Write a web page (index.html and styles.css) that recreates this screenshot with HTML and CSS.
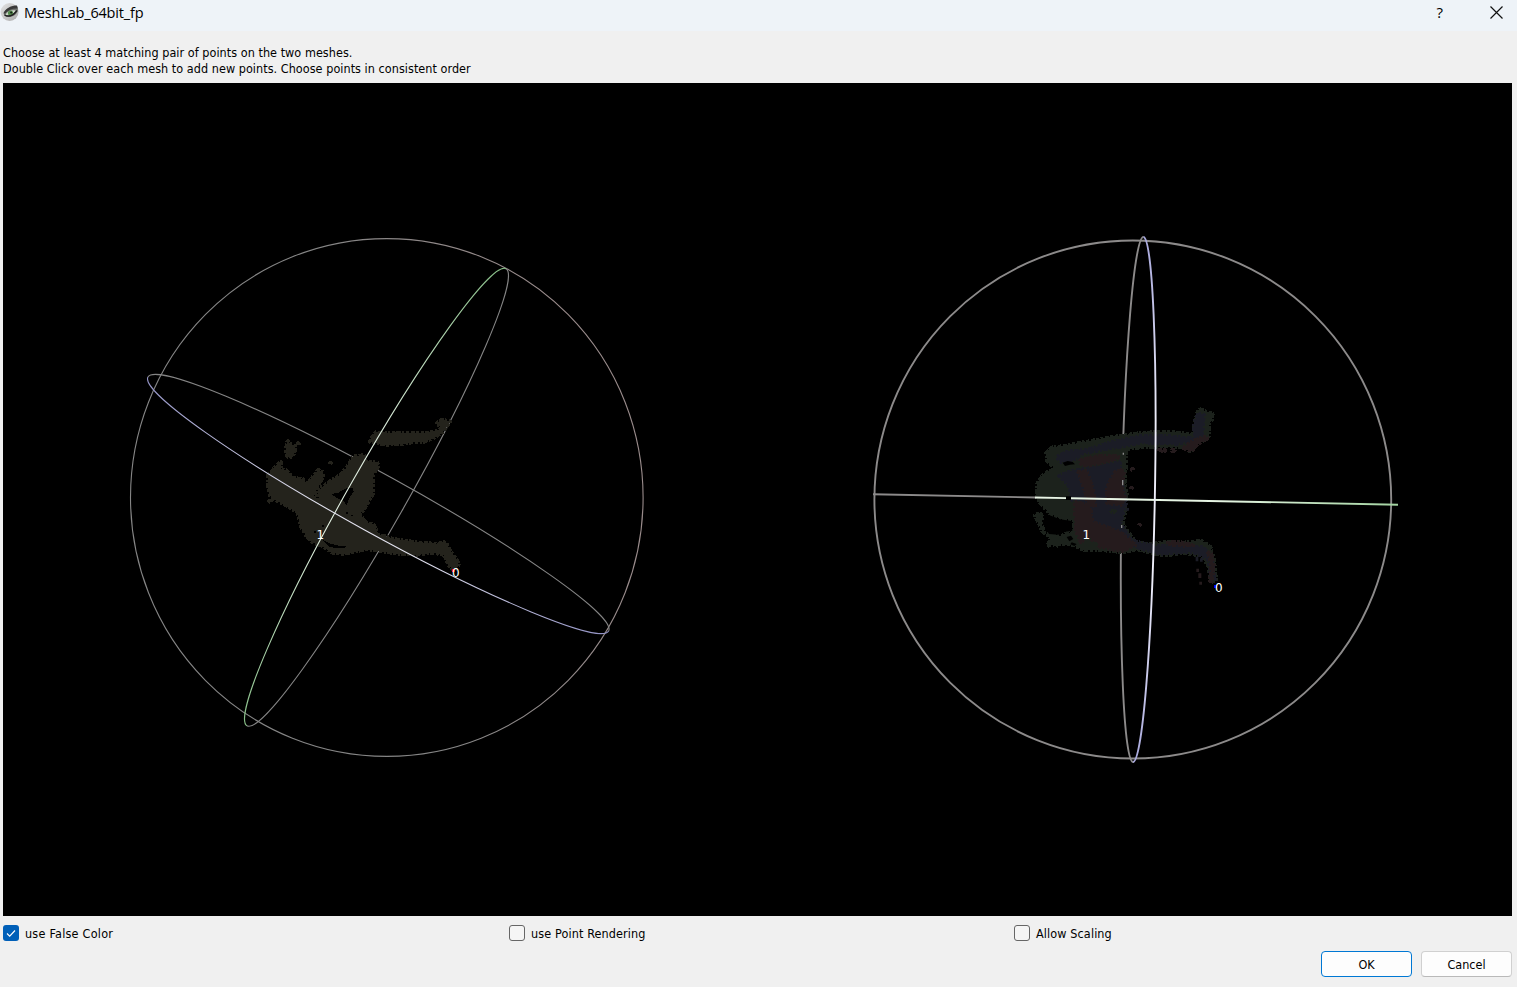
FILE: index.html
```html
<!DOCTYPE html>
<html lang="en">
<head>
<meta charset="utf-8">
<title>MeshLab_64bit_fp</title>
<link rel="stylesheet" href="styles.css">
</head>
<body>
<div class="dialog">
  <header class="titlebar">
    <svg class="logo" width="20" height="20" viewBox="0 0 20 20">
      <defs>
        <linearGradient id="ball" x1="0" y1="0" x2="1" y2="1"><stop offset="0" stop-color="#e4e4e4"/><stop offset="1" stop-color="#a9a9a9"/></linearGradient>
      </defs>
      <circle cx="9.600" cy="10" r="9" fill="url(#ball)"/>
      <path d="M3.500 11.500C6 6.500 11 4.500 17 4L18 8C17 13 12 15.500 7 15C5 14.500 4 13 3.500 11.500Z" fill="#70736f"/>
      <path d="M3.500 11C6 6 11 3.500 17 3.500L17.800 6.500C13 6 8 8 5 11.500Z" fill="#3a3a3a"/>
      <path d="M5.500 12.800C7 9.500 11 7.800 15.500 8.500C14 12.500 10 14.500 5.500 12.800Z" fill="#cdd8c8"/>
      <circle cx="10.500" cy="11" r="2.600" fill="#548d4d"/>
      <circle cx="11.200" cy="10.500" r="1.100" fill="#162116"/>
      <path d="M4.500 13Q11 16.500 17 8.500" fill="none" stroke="#202020" stroke-width="1.400"/>
    </svg>
    <span class="title">MeshLab_64bit_fp</span>
    <span class="help">?</span>
    <svg class="close" width="13" height="13" viewBox="0 0 13 13"><path d="M.5.5l12 12M12.500.5l-12 12"/></svg>
  </header>

  <p class="hint"><span class="hint-a">Choose at least 4 matching pair of points on the two meshes.</span><br><span class="hint-b">Double Click over each mesh to add new points. Choose points in consistent order</span></p>

  <svg class="viewport" width="1509" height="833" viewBox="3 83 1509 833">
    <defs>
      <linearGradient id="rim" gradientUnits="userSpaceOnUse" x1="130" y1="560" x2="643" y2="430"><stop offset=".5" stop-color="#858585"/><stop offset=".9" stop-color="#998b8b"/></linearGradient>
      <linearGradient id="blueArc" x1="0" x2="1" y1="0" y2="0"><stop offset="0" stop-color="#9292c4"/><stop offset=".4" stop-color="#e2e2ee"/><stop offset=".6" stop-color="#e2e2ee"/><stop offset="1" stop-color="#9292c4"/></linearGradient>
      <linearGradient id="greenArc" x1="0" x2="1" y1="0" y2="0"><stop offset="0" stop-color="#86bd86"/><stop offset=".4" stop-color="#e2f0e2"/><stop offset=".6" stop-color="#dceadc"/><stop offset="1" stop-color="#86bd86"/></linearGradient>
      <linearGradient id="vertArc" x1="0" x2="1" y1="0" y2="0"><stop offset="0" stop-color="#a8a8dc"/><stop offset=".35" stop-color="#eeeefa"/><stop offset=".65" stop-color="#eeeefa"/><stop offset="1" stop-color="#a8a8dc"/></linearGradient>
      <linearGradient id="axis" gradientUnits="userSpaceOnUse" x1="1035" y1="0" x2="1398" y2="0"><stop offset="0" stop-color="#e9f5e6"/><stop offset=".5" stop-color="#e6f5e3"/><stop offset="1" stop-color="#a3d3a1"/></linearGradient>
    </defs>

    <!-- left trackball, rear arcs -->
    <g class="wire thin">
      <ellipse cx="386.800" cy="497.500" rx="256.300" ry="258.900" stroke="url(#rim)"/>
      <path transform="translate(378.300 504) rotate(28.860)" d="M-263 0A263 29.300 0 0 1 263 0"/>
      <path transform="translate(376.500 497.300) rotate(-60.460)" d="M-262.700 0A262.700 28.800 0 0 0 262.700 0"/>
    </g>

    <!-- left point cloud -->
    <g class="cloud olive" transform="translate(250 400) scale(.33333)">
      <path d="M357 126L376 96 400 100 430 97 470 99 500 98 530 98 560 92 574 84 558 70 576 58 602 64 590 80 577 98 550 115 520 127 490 127 460 133 410 135 385 131Z"/>
      <path d="M108 140L112 121 122 132 136 137 136 150 130 170 112 172 107 155ZM143 129h4v5h-4zM239 188h4v4h-4zM57 302h6v5h-6z"/>
      <path d="M53 225L68 210 82 192 96 184 92 207 110 210 130 232 160 237 172 252 180 240 205 208 220 217 220 230 205 262 188 290 200 289 215 262 240 243 270 224 290 202 310 169 342 164 350 187 382 185 386 200 370 225 370 280 355 308 342 330 330 342 345 365 373 374 385 402 430 416 500 426 560 431 588 425 600 450 622 480 627 495 612 513 595 495 582 466 550 459 500 465 440 462 400 455 350 448 320 455 280 462 250 460 215 438 187 428 168 408 152 380 142 338 110 318 80 303 60 288 53 260Z"/>
      <path class="hole" d="M242 281L262 280 285 266 308 263 311 274 297 296 290 317 280 302 267 298ZM216 419L240 431 267 437 290 437 284 443 258 445 235 439Z"/>
      <path class="hole" d="M193 392h5v7h-5zM215 375h6v5h-6zM288 337h5v5h-5zM304 344h6v4h-6zM198 290h8v5h-8z"/>
    </g>

    <!-- left trackball, front arcs -->
    <g class="wire thin">
      <path transform="translate(376.500 497.300) rotate(-60.460)" d="M-262.700 0A262.700 28.800 0 0 1 262.700 0" stroke="url(#greenArc)"/>
      <path transform="translate(378.300 504) rotate(28.860)" d="M-263 0A263 29.300 0 0 0 263 0" stroke="url(#blueArc)"/>
    </g>
    <path d="M452 569h3v3h-3z" fill="#ff0000"/>
    <text class="label" x="316.500" y="539">1</text>
    <text class="label" x="452" y="577">0</text>

    <!-- right trackball, rear arcs -->
    <g class="wire thick">
      <ellipse cx="1132.800" cy="499.500" rx="258.400" ry="259"/>
      <path transform="translate(1138.200 499.500) rotate(91.130)" d="M-262.600 0A262.600 16.600 0 0 0 262.600 0"/>
      <path d="M873 494.300L1036 497.500"/>
    </g>

    <!-- right point cloud -->
    <g transform="translate(1010 390) scale(.33333)">
      <path class="cloud green" d="M108 187L127 171 165 167 210 158 300 141 400 127 480 125 550 132 552 100 562 65 570 57 609 71 606 92 597 100 597 140 565 163 540 185 515 172 470 170 400 172 350 178 348 235 345 280 352 310 343 340 348 360 338 400 358 430 378 457 420 462 470 454 520 457 575 451 602 470 613 510 619 570 602 578 595 530 575 498 520 489 470 497 430 492 390 480 335 487 260 480 222 482 190 465 155 463 112 466 122 443 97 425 73 375 90 367 98 380 94 400 105 430 150 438 175 427 190 430 190 390 150 385 115 368 79 325 81 280 102 250 135 236 111 215Z"/>
      <path class="cloud blue" d="M140 200L170 184 230 179 300 157 390 138 480 138 553 145 552 95 565 70 583 73 577 135 550 152 500 162 400 158 340 169 220 190 185 215 150 216Z"/>
      <path class="cloud blue" d="M145 258L178 244 250 232 330 216 340 300 350 335 332 400 365 450 430 467 520 468 580 470 603 500 616 570 603 565 595 510 550 486 450 492 390 476 280 425 210 335 185 330 175 285Z"/>
      <path class="cloud red" d="M210 211L250 199 310 196 332 202 290 216 235 227 212 223ZM333 240L343 242 335 290 345 320 335 345 290 340 290 290 315 245ZM203 245L230 243 248 290 257 350 234 340 220 290ZM195 335L240 345 248 395 330 425 378 465 335 485 270 471 230 435 213 460 196 420ZM540 157L580 139 596 144 565 162 545 184 518 175ZM470 457L510 455 555 466 520 468 480 464Z"/>
      <path class="cloud red" d="M592 484L604 490 612 525 606 575 598 575 604 525ZM365 236h5v5h-5zM362 293h4v4h-4zM387 403h4v4h-4zM447 179h18v6h-18zM485 178h10v6h-10z"/>
      <path class="hole" d="M103 388L117 375 150 388 185 393 187 422 160 426 145 434 117 432 106 414ZM158 218L173 213 188 216 195 223 180 224 165 228ZM170 441L183 437 190 447 178 454ZM185 457l15 5-7 6-12-5zM168 319h15v11h-15z"/>
      <g class="cloud green"><path d="M140 463h6v5h-6zM302 361h14v5h-14zM240 460h18v8h-18zM115 460h4v8h-4z"/></g>
      <path d="M336 270h4v16h-4zM333 405h4v9h-4zM338 188h4v6h-4z" fill="#8c8c8c"/>
      <path d="M557 500h8v14h-8zM570 505h8v10h-8zM350 354h7v8h-7z" fill="#1b1c26"/>
      <path d="M559 536h8v10h-8zM565 550h9v14h-9zM568 575h8v9h-8z" fill="#251b1d"/>
    </g>

    <!-- right trackball, front arcs -->
    <g class="wire thick">
      <path d="M1035 497.500L1066 498.100M1071 498.200L1398 504.700" stroke="url(#axis)"/>
      <path transform="translate(1138.200 499.500) rotate(91.130)" d="M-262.600 0A262.600 16.600 0 0 1 262.600 0" stroke="url(#vertArc)"/>
    </g>
    <path d="M1214 585h3v3h-3z" fill="#0000ff"/>
    <text class="label" x="1082.500" y="539">1</text>
    <text class="label" x="1215" y="592">0</text>
  </svg>

  <div class="options">
    <label class="option"><span class="box checked"><svg width="16" height="16" viewBox="0 0 16 16"><path d="M4 8.500l2.700 2.600L12 5.500"/></svg></span><span class="wide">use False Color</span></label>
    <label class="option"><span class="box"></span><span class="medium">use Point Rendering</span></label>
    <label class="option"><span class="box"></span><span class="medium">Allow Scaling</span></label>
  </div>
  <div class="buttons">
    <button class="btn primary">OK</button>
    <button class="btn">Cancel</button>
  </div>
</div>
</body>
</html>
```
FILE: styles.css
```css
* { box-sizing: border-box; }
body {
  margin: 0;
  background: #f0f0f0;
  color: #000;
  font: 12.500px/16px "DejaVu Sans Condensed", "DejaVu Sans", sans-serif;
  font-stretch: condensed;
}
.dialog {
  width: 1517px;
  height: 987px;
  display: flex;
  flex-direction: column;
  overflow: hidden;
}
.titlebar {
  height: 31px;
  padding: 2px 14px 0 0;
  display: flex;
  align-items: flex-start;
  background: #eef3f8;
  font-family: "Open Sans", "Noto Sans", sans-serif;
  font-stretch: normal;
}
.title {
  margin-left: 4px;
  font-size: 14.500px;
  line-height: 21px;
  letter-spacing: -0.180px;
}
.help { margin-left: auto; font-size: 15px; line-height: 20px; }
.close { margin: 4px 0 0 47px; fill: none; stroke: #111; stroke-width: 1.200; }
.hint { margin: 0; padding: 14px 3px 0; height: 52px; white-space: nowrap; }
.hint-a, .hint-b { letter-spacing: 0.045px; }
.viewport { display: block; margin-left: 3px; background: #000; flex: none; }
.wire { fill: none; stroke: #858585; }
.thin { stroke-width: 1.100; }
.thick { stroke-width: 1.900; stroke: #8c8a8a; }
.cloud {
  shape-rendering: crispEdges;
  stroke-width: 10;
  stroke-dasharray: 9 4 14 3 7 6;
  stroke-linejoin: bevel;
}
.olive { fill: #24231c; stroke: #24231c; }
.green { fill: #1c221c; stroke: #1c221c; }
.blue { fill: #1b1c26; stroke: #1b1c26; }
.red { fill: #251b1d; stroke: #251b1d; }
.hole { fill: #000; stroke: none; }
.label { fill: #fff; font: 12px "DejaVu Sans", sans-serif; font-stretch: normal; }
.options {
  display: grid;
  grid-template-columns: 506px 505px 1fr;
  padding: 9px 3px 0;
}
.option { display: flex; gap: 6px; height: 16px; align-items: flex-start; white-space: nowrap; }
.option > span:last-child { line-height: 18px; }
.wide { letter-spacing: 0.240px; }
.medium { letter-spacing: 0.120px; }
.box {
  width: 16px;
  height: 16px;
  flex: none;
  border: 1px solid #666;
  border-radius: 3px;
  background: #f5f5f5;
}
.checked { border: 0; background: #005fb8; }
.checked svg { display: block; fill: none; stroke: #fff; stroke-width: 1.100; }
.buttons { display: flex; justify-content: flex-end; gap: 9px; padding: 10px 5px 0 0; }
.btn {
  width: 91px;
  height: 26px;
  padding: 1px 0 0;
  border: 1px solid #d0d0d0;
  border-bottom-color: #b9b9b9;
  border-radius: 4px;
  background: #fdfdfd;
  color: #000;
  font: inherit;
}
.primary { border-color: #0078d4; }
```
